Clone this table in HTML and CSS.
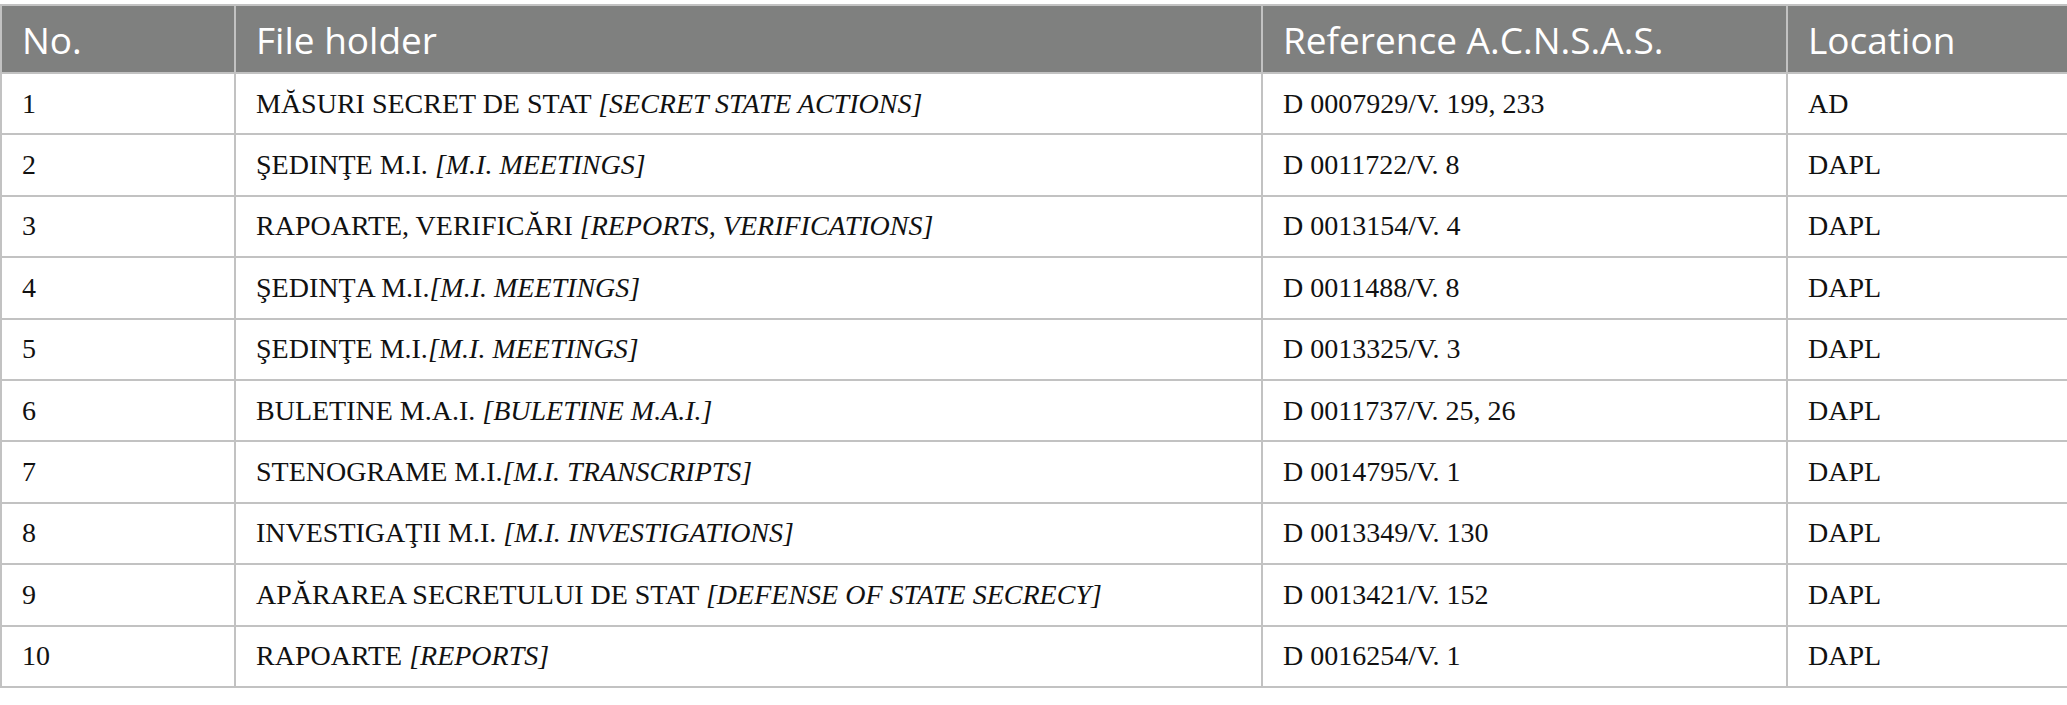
FILE: index.html
```html
<!DOCTYPE html>
<html lang="en">
<head>
<meta charset="utf-8">
<link rel="stylesheet" href="styles.css">
</head>
<body>
<table class="data-table">
  <colgroup>
    <col class="c-no">
    <col class="c-holder">
    <col class="c-ref">
    <col class="c-loc">
  </colgroup>
  <thead>
    <tr><th>No.</th><th>File holder</th><th>Reference A.C.N.S.A.S.</th><th>Location</th></tr>
  </thead>
  <tbody>
    <tr><td>1</td><td>MĂSURI SECRET DE STAT <i>[SECRET STATE ACTIONS]</i></td><td>D 0007929/V. 199, 233</td><td>AD</td></tr>
    <tr><td>2</td><td>ŞEDINŢE M.I. <i>[M.I. MEETINGS]</i></td><td>D 0011722/V. 8</td><td>DAPL</td></tr>
    <tr><td>3</td><td>RAPOARTE, VERIFICĂRI <i>[REPORTS, VERIFICATIONS]</i></td><td>D 0013154/V. 4</td><td>DAPL</td></tr>
    <tr><td>4</td><td>ŞEDINŢA M.I.<i>[M.I. MEETINGS]</i></td><td>D 0011488/V. 8</td><td>DAPL</td></tr>
    <tr><td>5</td><td>ŞEDINŢE M.I.<i>[M.I. MEETINGS]</i></td><td>D 0013325/V. 3</td><td>DAPL</td></tr>
    <tr><td>6</td><td>BULETINE M.A.I. <i>[BULETINE M.A.I.]</i></td><td>D 0011737/V. 25, 26</td><td>DAPL</td></tr>
    <tr><td>7</td><td>STENOGRAME M.I.<i>[M.I. TRANSCRIPTS]</i></td><td>D 0014795/V. 1</td><td>DAPL</td></tr>
    <tr><td>8</td><td>INVESTIGAŢII M.I. <i>[M.I. INVESTIGATIONS]</i></td><td>D 0013349/V. 130</td><td>DAPL</td></tr>
    <tr><td>9</td><td>APĂRAREA SECRETULUI DE STAT <i>[DEFENSE OF STATE SECRECY]</i></td><td>D 0013421/V. 152</td><td>DAPL</td></tr>
    <tr><td>10</td><td>RAPOARTE <i>[REPORTS]</i></td><td>D 0016254/V. 1</td><td>DAPL</td></tr>
  </tbody>
</table>
</body>
</html>
```

FILE: styles.css
```css
html, body {
  margin: 0;
  padding: 0;
  background: #ffffff;
}

body {
  padding-top: 4px;
}

.data-table {
  border-collapse: collapse;
  table-layout: fixed;
  width: 2067px;
}

.c-no { width: 234px; }
.c-holder { width: 1027px; }
.c-ref { width: 525px; }
.c-loc { width: 281px; }

.data-table th,
.data-table td {
  border: 2px solid #c2c2c2;
  text-align: left;
  padding: 0 0 0 20px;
  vertical-align: middle;
  white-space: nowrap;
}

.data-table th {
  background: #7f807f;
  color: #ffffff;
  font-family: "Open Sans", "Noto Sans", sans-serif;
  font-weight: 400;
  font-size: 37px;
  height: 66px;
}

.data-table td {
  color: #111111;
  font-family: "Liberation Serif", "Times New Roman", serif;
  font-size: 28px;
  height: 59.4px;
}

.data-table td i {
  font-style: italic;
}
```
